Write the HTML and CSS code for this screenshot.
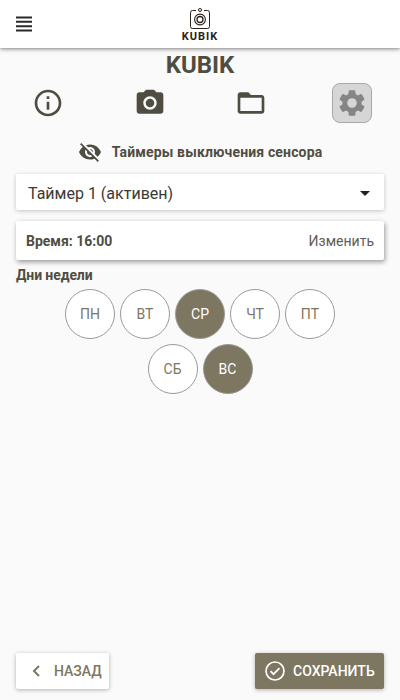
FILE: index.html
```html
<!DOCTYPE html>
<html lang="ru">
<head>
    <meta charset="UTF-8">
    <meta name="viewport" content="width=device-width, initial-scale=1.0">
    <title>KUBIK</title>
    <link rel="stylesheet" href="styles.css">
</head>
<body>
    <header class="topbar">
        <div class="menu-btn">
            <svg width="16" height="16" viewBox="0 0 16 16"><path d="M0 0.5h16v2H0zM0 4.8h16v2H0zM0 9.2h16v2H0zM0 13.5h16v2H0z"/></svg>
        </div>
        <div class="logo">
            <svg width="20" height="21" viewBox="0 0 20 21" fill="none" stroke="#2b2118">
                <path d="M6 2.5H2.5a2 2 0 0 0-2 2v14a2 2 0 0 0 2 2h15a2 2 0 0 0 2-2v-14a2 2 0 0 0-2-2H14" stroke-width="1"/>
                <circle cx="10" cy="2" r="1.5" stroke-width="1"/>
                <circle cx="10" cy="11.5" r="5.4" stroke-width="1.1"/>
                <circle cx="10" cy="11.5" r="3" stroke-width="1.3"/>
            </svg>
            <span class="logo-text">KUBIK</span>
        </div>
    </header>

    <h1 class="title">KUBIK</h1>

    <nav class="tabs">
        <div class="tab">
            <svg width="32" height="32" viewBox="0 0 24 24"><path d="M11 7h2v2h-2zm0 4h2v6h-2zm1-9C6.48 2 2 6.48 2 12s4.48 10 10 10 10-4.48 10-10S17.52 2 12 2zm0 18c-4.41 0-8-3.59-8-8s3.59-8 8-8 8 3.59 8 8-3.59 8-8 8z"/></svg>
        </div>
        <div class="tab tab-camera">
            <svg width="32" height="32" viewBox="0 0 24 24"><circle cx="12" cy="12" r="3.2"/><path d="M9 2L7.17 4H4c-1.1 0-2 .9-2 2v12c0 1.1.9 2 2 2h16c1.1 0 2-.9 2-2V6c0-1.1-.9-2-2-2h-3.17L15 2H9zm3 15c-2.76 0-5-2.24-5-5s2.24-5 5-5 5 2.24 5 5-2.24 5-5 5z"/></svg>
        </div>
        <div class="tab">
            <svg width="32" height="32" viewBox="0 0 24 24"><path d="M20 6h-8l-2-2H4c-1.1 0-1.99.9-1.99 2L2 18c0 1.1.9 2 2 2h16c1.1 0 2-.9 2-2V8c0-1.1-.9-2-2-2zm0 12H4V8h16v10z"/></svg>
        </div>
        <div class="tab tab-active">
            <svg width="32" height="32" viewBox="0 0 24 24"><path d="M19.14 12.94c.04-.3.06-.61.06-.94s-.02-.64-.07-.94l2.03-1.58a.49.49 0 0 0 .12-.61l-1.92-3.32a.49.49 0 0 0-.59-.22l-2.39.96c-.5-.38-1.03-.7-1.62-.94l-.36-2.54a.48.48 0 0 0-.48-.41h-3.84a.48.48 0 0 0-.47.41l-.36 2.54c-.59.24-1.13.57-1.62.94l-2.39-.96a.49.49 0 0 0-.59.22L2.74 8.87a.48.48 0 0 0 .12.61l2.03 1.58c-.05.3-.09.63-.09.94s.02.64.07.94l-2.03 1.58a.49.49 0 0 0-.12.61l1.92 3.32c.12.22.37.29.59.22l2.39-.96c.5.38 1.03.7 1.62.94l.36 2.54c.05.24.24.41.48.41h3.84c.24 0 .44-.17.47-.41l.36-2.54c.59-.24 1.13-.56 1.62-.94l2.39.96c.22.08.47 0 .59-.22l1.92-3.32a.48.48 0 0 0-.12-.61l-2.01-1.58zM12 15.6A3.6 3.6 0 1 1 12 8.4a3.6 3.6 0 0 1 0 7.2z"/></svg>
        </div>
    </nav>

    <div class="section-head">
        <svg width="24" height="24" viewBox="0 0 24 24"><path d="M12 7c2.76 0 5 2.24 5 5 0 .65-.13 1.26-.36 1.83l2.92 2.92c1.51-1.26 2.7-2.89 3.43-4.75-1.73-4.39-6-7.5-11-7.5-1.4 0-2.74.25-3.98.7l2.16 2.16C10.74 7.13 11.35 7 12 7zM2 4.27l2.28 2.28.46.46A11.8 11.8 0 0 0 1 12c1.73 4.39 6 7.5 11 7.5 1.55 0 3.03-.3 4.38-.84l.42.42L19.73 22 21 20.73 3.27 3 2 4.27zM7.53 9.8l1.55 1.55c-.05.21-.08.43-.08.65 0 1.66 1.34 3 3 3 .22 0 .44-.03.65-.08l1.55 1.55c-.67.33-1.41.53-2.2.53-2.76 0-5-2.24-5-5 0-.79.2-1.53.53-2.2zm4.31-.78l3.15 3.15.02-.16c0-1.66-1.34-3-3-3l-.17.01z"/></svg>
        <span>Таймеры выключения сенсора</span>
    </div>

    <div class="card select-card">
        <span>Таймер 1 (активен)</span>
        <span class="caret"></span>
    </div>

    <div class="card time-card">
        <span class="time-value">Время: 16:00</span>
        <span class="time-change">Изменить</span>
    </div>

    <div class="days-label">Дни недели</div>
    <div class="days">
        <div class="day">ПН</div>
        <div class="day">ВТ</div>
        <div class="day day-on">СР</div>
        <div class="day">ЧТ</div>
        <div class="day">ПТ</div>
        <div class="day">СБ</div>
        <div class="day day-on">ВС</div>
    </div>

    <footer class="actions">
        <div class="btn btn-back">
            <svg width="16" height="16" viewBox="0 0 16 16" fill="none" stroke="#7d7660" stroke-width="2"><path d="M10 3L5 8l5 5"/></svg>
            <span>НАЗАД</span>
        </div>
        <div class="btn btn-save">
            <svg width="20" height="20" viewBox="0 0 20 20" fill="none" stroke="#fff"><circle cx="10" cy="10" r="9" stroke-width="1.7"/><path d="M5.5 10.2l3 3 6-6" stroke-width="1.7"/></svg>
            <span>СОХРАНИТЬ</span>
        </div>
    </footer>
</body>
</html>
```
FILE: styles.css
```css
* {
    box-sizing: border-box;
}
html, body {
    margin: 0;
    height: 100%;
}
body {
    font-family: Roboto, sans-serif;
    background-color: #fafafa;
    color: #4f4d42;
    display: flex;
    flex-direction: column;
    height: 700px;
    overflow: hidden;
}
.topbar {
    height: 48px;
    flex: none;
    background-color: #fff;
    box-shadow: 0 1px 4px rgba(0, 0, 0, 0.5);
    display: flex;
    align-items: flex-start;
    justify-content: center;
    padding-top: 8px;
    position: relative;
}
.menu-btn {
    position: absolute;
    left: 16px;
    top: 16px;
    height: 16px;
}
.menu-btn svg {
    fill: #2a2a2a;
    display: block;
}
.logo {
    display: flex;
    flex-direction: column;
    align-items: center;
}
.logo svg {
    display: block;
}
.logo-text {
    font-size: 11px;
    line-height: 12px;
    font-weight: 700;
    letter-spacing: 1px;
    color: #2b2118;
    margin-top: 2px;
}
.title {
    margin: 0;
    height: 35px;
    padding-top: 1px;
    font-size: 24px;
    line-height: 33px;
    font-weight: 700;
    text-align: center;
}
.tabs {
    display: flex;
    gap: 61px;
    padding: 0 28px;
    height: 40px;
}
.tab {
    width: 40px;
    height: 40px;
    display: flex;
    align-items: center;
    justify-content: center;
    border: 1px solid transparent;
    border-radius: 8px;
}
.tab svg {
    fill: #4f4d42;
}
.tab-camera {
    margin-left: 1px;
}
.tab-active {
    background-color: #d6d6d6;
    border-color: #a8a8a8;
}
.tab-active svg {
    fill: #858585;
}
.section-head {
    display: flex;
    align-items: center;
    justify-content: center;
    gap: 10px;
    height: 24px;
    margin-top: 17px;
    font-size: 14px;
    font-weight: 700;
    letter-spacing: 0.15px;
}
.section-head svg {
    fill: #4f4d42;
}
.card {
    margin: 0 16px;
    background-color: #fff;
    border-radius: 2px;
    display: flex;
    align-items: center;
    justify-content: space-between;
}
.select-card {
    height: 36px;
    margin-top: 10px;
    padding: 2px 14px 0 12px;
    font-size: 16px;
    color: #3b3a33;
    box-shadow: 0 1px 4px rgba(0, 0, 0, 0.22);
}
.caret {
    width: 0;
    height: 0;
    border-left: 5px solid transparent;
    border-right: 5px solid transparent;
    border-top: 5px solid #222;
}
.time-card {
    height: 39px;
    margin-top: 11px;
    padding: 0 10px;
    font-size: 14px;
    box-shadow: 1px 2px 5px rgba(0, 0, 0, 0.4);
}
.time-value {
    font-weight: 700;
}
.time-change {
    color: #5f5d54;
}
.days-label {
    margin: 7px 16px 0;
    font-size: 14px;
    line-height: 16px;
    font-weight: 700;
    letter-spacing: -0.1px;
}
.days {
    display: flex;
    flex-wrap: wrap;
    justify-content: center;
    gap: 5px;
    width: 280px;
    margin: 6px auto 0;
}
.day {
    width: 50px;
    height: 50px;
    border-radius: 50%;
    background-color: #fff;
    border: 1px solid #9a9a9a;
    color: #7d7660;
    font-size: 14px;
    display: flex;
    align-items: center;
    justify-content: center;
}
.day-on {
    background-color: #7d7660;
    border-color: #9a9a9a;
    color: #fff;
}
.actions {
    margin-top: auto;
    display: flex;
    justify-content: space-between;
    padding: 0 16px 11px;
}
.btn {
    height: 36px;
    border-radius: 2px;
    display: flex;
    align-items: center;
    font-size: 14px;
    font-weight: 500;
    box-shadow: 0 1px 4px rgba(0, 0, 0, 0.3);
}
.btn-back {
    width: 93px;
    padding-left: 13px;
    gap: 9px;
    background-color: #fff;
    color: #7d7660;
}
.btn-save {
    width: 129px;
    padding-left: 10px;
    gap: 8px;
    background-color: #7d7660;
    color: #fff;
}
```
